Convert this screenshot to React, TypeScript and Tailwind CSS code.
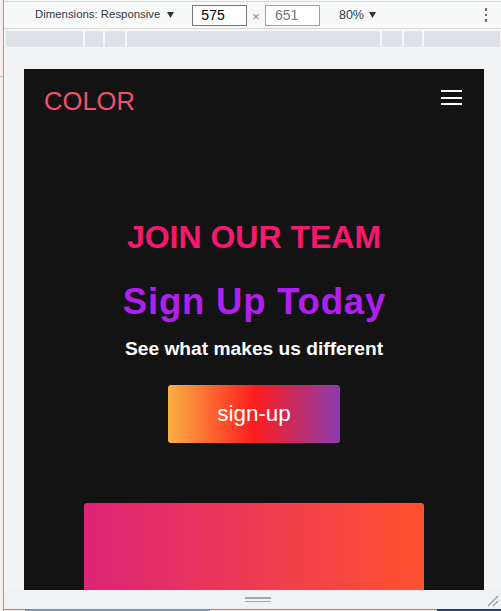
import React from "react";

const sans = { fontFamily: '"Liberation Sans", Arial, sans-serif' };

const Caret = () => (
  <svg width="7" height="6" viewBox="0 0 7 6" className="shrink-0">
    <path d="M0 0 H7 L3.5 6 Z" fill="#333" />
  </svg>
);

const Toolbar = () => (
  <div className="h-[26px] bg-[#f8f9f9] flex items-center text-[#303942]">
    <div className="ml-[31px] flex items-center gap-[7px]">
      <span className="text-[11.4px] leading-none">Dimensions: Responsive</span>
      <Caret />
    </div>
    <div className="ml-[18px] w-[55px] h-[21px] border border-[#767676] bg-white flex items-center pl-[8px] text-[14px] leading-none text-black">
      575
    </div>
    <span className="mx-[5px] text-[13px] leading-none text-[#c0786a] mt-[3px]">×</span>
    <div className="w-[55px] h-[21px] border border-[#a0a0a0] bg-white flex items-center pl-[9px] text-[14px] leading-none text-[#777]">
      651
    </div>
    <div className="ml-[19px] flex items-center gap-[5px]">
      <span className="text-[12.5px] leading-none">80%</span>
      <Caret />
    </div>
    <div className="ml-auto mr-[14px] flex flex-col gap-[3px]">
      <span className="block w-[2.5px] h-[2.5px] bg-[#6e6e6e]" />
      <span className="block w-[2.5px] h-[2.5px] bg-[#6e6e6e]" />
      <span className="block w-[2.5px] h-[2.5px] bg-[#6e6e6e]" />
    </div>
  </div>
);

const Ruler = () => (
  <div className="h-[16px] pl-[2px] pr-[1px] flex gap-[2px]">
    <div className="w-[77px] bg-[#dee1e6]" />
    <div className="w-[18px] bg-[#dee1e6]" />
    <div className="w-[20px] bg-[#dee1e6]" />
    <div className="flex-1 bg-[#dee1e6]" />
    <div className="w-[20px] bg-[#dee1e6]" />
    <div className="w-[18px] bg-[#dee1e6]" />
    <div className="w-[76px] bg-[#dee1e6]" />
  </div>
);

const Device = () => (
  <div className="w-[460px] h-[521px] bg-[#131313] overflow-hidden flex flex-col" style={sans}>
    <header className="flex justify-between items-start pl-5 pr-[22px] pt-5">
      <span className="text-[25.6px] leading-none text-[#f0506e]">COLOR</span>
      <div className="mt-px flex flex-col gap-[4.7px]">
        <span className="block w-[21px] h-[2px] bg-white" />
        <span className="block w-[21px] h-[2px] bg-white" />
        <span className="block w-[21px] h-[2px] bg-white" />
      </div>
    </header>
    <section className="flex flex-col items-center">
      <h2 className="mt-[106px] text-[32px] font-bold leading-none text-[#f7186f]">JOIN OUR TEAM</h2>
      <h1 className="mt-[31px] text-[36.5px] font-bold leading-none tracking-[0.8px] pl-[0.8px] text-[#b01ff2]">
        Sign Up Today
      </h1>
      <p className="mt-[19px] text-[19.2px] font-bold leading-none text-white">See what makes us different</p>
      <button className="mt-[26.8px] w-[172px] h-[58px] rounded-[3px] bg-[linear-gradient(to_right,#fcb045,#fd1d1d,#8a3cae)] text-white text-[22.4px] leading-none flex items-center justify-center">
        sign-up
      </button>
      <div className="mt-[60px] w-[340px] h-[150px] shrink-0 rounded-[3px] bg-[linear-gradient(to_right,#dd2476,#ff512f)]" />
    </section>
  </div>
);

export default function App() {
  return (
    <div className="w-[501px] h-[611px] overflow-hidden flex bg-[#f7eeee]" style={sans}>
      <div className="w-[3px] flex flex-col">
        <div className="h-[76px]" />
        <div className="h-px bg-[#e8b8b8]" />
      </div>
      <div className="flex-1 flex flex-col border-l border-[#9a9a9a]">
        <div className="h-px bg-[#f6f6f6]" />
        <div className="h-px bg-[#d9d9d9]" />
        <Toolbar />
        <div className="h-px bg-[#d8d8d8]" />
        <div className="h-[2px] bg-[#f7f7f7]" />
        <div className="bg-[#f7f7f7]">
          <Ruler />
        </div>
        <div className="flex-1 bg-[#f3f4f5] pt-[22px] pl-[20px]">
          <Device />
        </div>
        <div className="relative h-[19px] bg-[#f1f2f4] flex justify-center">
          <div className="ml-[10px] mt-[7px] flex flex-col gap-[2px]">
            <span className="block w-[26px] h-[1.5px] bg-[#a8a8a8]" />
            <span className="block w-[26px] h-[1.5px] bg-[#a8a8a8]" />
          </div>
          <svg className="absolute right-[2px] bottom-[2px]" width="12" height="12" viewBox="0 0 12 12">
            <path d="M1 11 L11 1 M6 11 L11 6" stroke="#9a9a9a" strokeWidth="1.2" />
          </svg>
        </div>
        <div className="h-px flex">
          <div className="flex-1 bg-[#8d8d8d]" />
          <div className="w-[64px] bg-[#203f7c]" />
        </div>
        <div className="h-px flex">
          <div className="ml-[21px] w-[185px] bg-[#8193bf]" />
          <div className="flex-1" />
          <div className="w-[64px] bg-[#203f7c]" />
        </div>
      </div>
    </div>
  );
}
